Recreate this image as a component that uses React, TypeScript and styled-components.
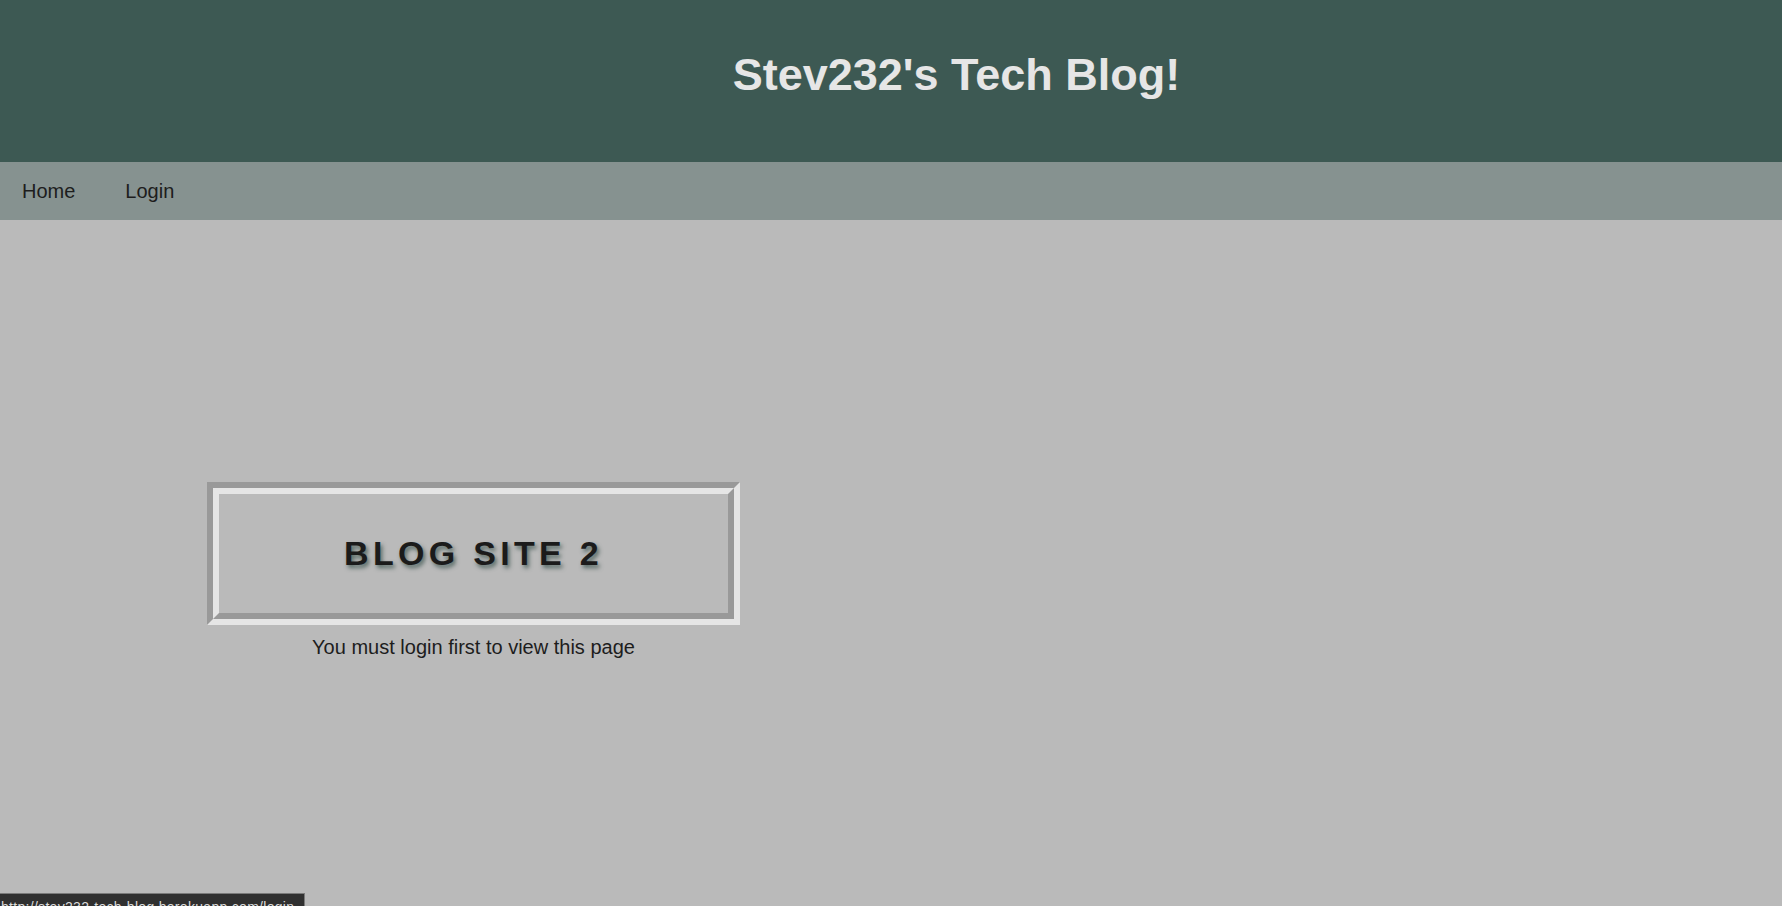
import React from "react";
import styled, { createGlobalStyle } from "styled-components";

const Global = createGlobalStyle`
  html, body {
    margin: 0;
    padding: 0;
    background: #bababa;
    font-family: "Liberation Sans", Arial, sans-serif;
  }
  * { box-sizing: border-box; }
`;

const Page = styled.div`
  min-height: 906px;
  background: #bababa;
  display: flex;
  flex-direction: column;
`;

const Header = styled.header`
  height: 162px;
  background: #3d5953;
  padding: 49px 0 0 131px;
`;

const Title = styled.h1`
  margin: 0;
  text-align: center;
  font-size: 45px;
  font-weight: 700;
  line-height: 51px;
  color: #e6e6e6;
`;

const Nav = styled.nav`
  height: 58px;
  background: #869290;
  display: flex;
  align-items: center;
  gap: 50px;
  padding: 0 0 0 22px;
`;

const NavLink = styled.a`
  font-size: 20px;
  color: #1d1d1d;
  text-decoration: none;
  cursor: pointer;
`;

const Main = styled.main`
  padding: 262px 0 0 207px;
  display: flex;
`;

const Column = styled.section`
  width: 533px;
  display: flex;
  flex-direction: column;
  align-items: center;
  gap: 11px;
`;

const Frame = styled.div`
  width: 533px;
  height: 143px;
  border: 6px solid;
  border-color: #999999 #e5e5e5 #e5e5e5 #999999;
`;

const FrameInner = styled.div`
  height: 100%;
  border: 6px solid;
  border-color: #e5e5e5 #999999 #999999 #e5e5e5;
  display: flex;
  align-items: center;
  justify-content: center;
`;

const Brand = styled.h2`
  margin: 0;
  font-size: 34px;
  font-weight: 700;
  letter-spacing: 4.3px;
  color: #1b1b1b;
  text-shadow: 2px 3px 4px rgba(52, 78, 72, 0.75);
`;

const Notice = styled.p`
  margin: 0;
  font-size: 20px;
  line-height: 23px;
  color: #1d1d1d;
`;

const StatusBar = styled.div`
  position: fixed;
  left: 0;
  bottom: -14px;
  height: 27px;
  width: 305px;
  background: #303030;
  border-top: 1px solid #7a7a7a;
  border-right: 1px solid #7a7a7a;
  color: #dcdcdc;
  font-size: 14px;
  line-height: 14px;
  letter-spacing: 0.3px;
  padding: 6px 0 0 1px;
  white-space: nowrap;
  overflow: hidden;
`;

export default function App() {
  return (
    <>
      <Global />
      <Page>
        <Header>
          <Title>Stev232's Tech Blog!</Title>
        </Header>
        <Nav>
          <NavLink>Home</NavLink>
          <NavLink>Login</NavLink>
        </Nav>
        <Main>
          <Column>
            <Frame>
              <FrameInner>
                <Brand>BLOG SITE 2</Brand>
              </FrameInner>
            </Frame>
            <Notice>You must login first to view this page</Notice>
          </Column>
        </Main>
      </Page>
      <StatusBar>http://stev232-tech-blog.herokuapp.com/login</StatusBar>
    </>
  );
}
